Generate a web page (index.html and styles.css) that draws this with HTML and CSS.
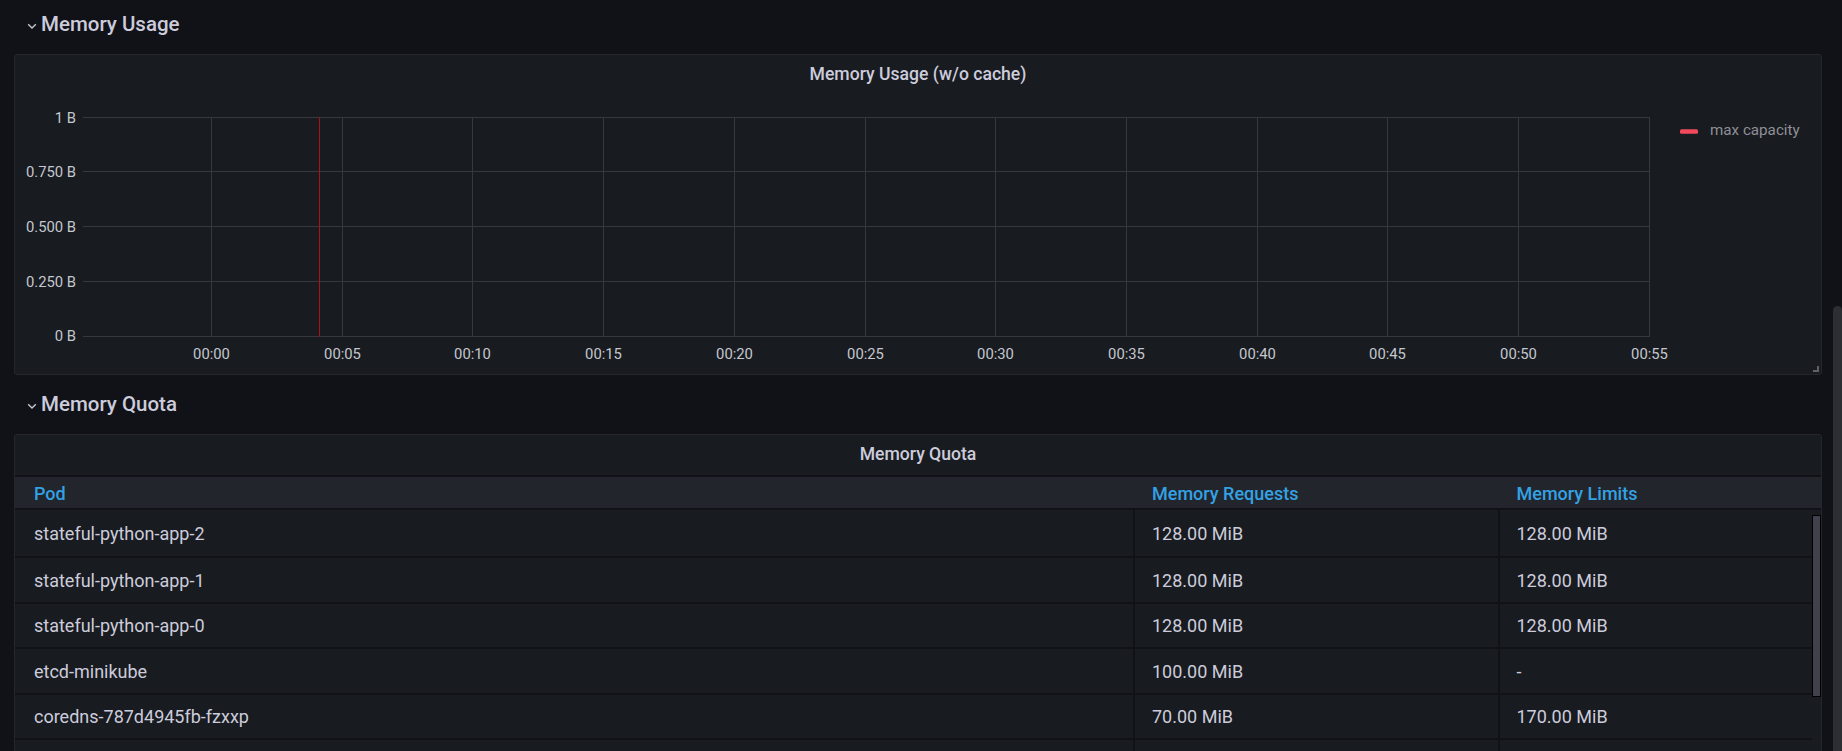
FILE: index.html
```html
<!DOCTYPE html>
<html>
<head>
<meta charset="utf-8">
<title>Memory</title>
<link rel="stylesheet" href="styles.css">
</head>
<body>
<div class="layout">
  <main class="dashboard">
    <div class="row-title">
      <svg class="chevron" width="10" height="7" viewBox="0 0 10 7"><polyline points="1.2,1.2 5,5 8.8,1.2"/></svg>
      <span>Memory Usage</span>
    </div>

    <section class="panel panel-graph">
      <header class="panel-header">Memory Usage (w/o cache)</header>
      <svg class="graph" width="1806" height="282" viewBox="0 0 1806 282">
        <g class="grid">
          <line x1="68" y1="25.5" x2="1635" y2="25.5"/>
          <line x1="68" y1="79.5" x2="1635" y2="79.5"/>
          <line x1="68" y1="134.5" x2="1635" y2="134.5"/>
          <line x1="68" y1="189.5" x2="1635" y2="189.5"/>
          <line x1="68" y1="244.5" x2="1635" y2="244.5"/>
          <line x1="196.5" y1="25" x2="196.5" y2="245"/>
          <line x1="327.5" y1="25" x2="327.5" y2="245"/>
          <line x1="457.5" y1="25" x2="457.5" y2="245"/>
          <line x1="588.5" y1="25" x2="588.5" y2="245"/>
          <line x1="719.5" y1="25" x2="719.5" y2="245"/>
          <line x1="850.5" y1="25" x2="850.5" y2="245"/>
          <line x1="980.5" y1="25" x2="980.5" y2="245"/>
          <line x1="1111.5" y1="25" x2="1111.5" y2="245"/>
          <line x1="1242.5" y1="25" x2="1242.5" y2="245"/>
          <line x1="1372.5" y1="25" x2="1372.5" y2="245"/>
          <line x1="1503.5" y1="25" x2="1503.5" y2="245"/>
          <line x1="1634.5" y1="25" x2="1634.5" y2="245"/>
        </g>
        <line class="marker" x1="304.5" y1="25" x2="304.5" y2="245"/>
        <g class="axis y-axis">
          <text x="61" y="30.5">1 B</text>
          <text x="61" y="84.5">0.750 B</text>
          <text x="61" y="139.5">0.500 B</text>
          <text x="61" y="194.5">0.250 B</text>
          <text x="61" y="249">0 B</text>
        </g>
        <g class="axis x-axis">
          <text x="196.5" y="267">00:00</text>
          <text x="327.5" y="267">00:05</text>
          <text x="457.5" y="267">00:10</text>
          <text x="588.5" y="267">00:15</text>
          <text x="719.5" y="267">00:20</text>
          <text x="850.5" y="267">00:25</text>
          <text x="980.5" y="267">00:30</text>
          <text x="1111.5" y="267">00:35</text>
          <text x="1242.5" y="267">00:40</text>
          <text x="1372.5" y="267">00:45</text>
          <text x="1503.5" y="267">00:50</text>
          <text x="1634.5" y="267">00:55</text>
        </g>
        <g class="legend">
          <rect x="1665" y="37.3" width="18" height="4.4" rx="1.5"/>
          <text x="1695" y="43">max capacity</text>
        </g>
      </svg>
      <span class="resize-handle"></span>
    </section>

    <div class="row-title row-title-next">
      <svg class="chevron" width="10" height="7" viewBox="0 0 10 7"><polyline points="1.2,1.2 5,5 8.8,1.2"/></svg>
      <span>Memory Quota</span>
    </div>

    <section class="panel panel-table">
      <header class="panel-header">Memory Quota</header>
      <div class="table">
        <div class="thead">
          <div class="th">Pod</div>
          <div class="th">Memory Requests</div>
          <div class="th">Memory Limits</div>
        </div>
        <div class="tbody-wrap">
          <div class="tbody">
            <div class="tr"><div class="td">stateful-python-app-2</div><div class="td">128.00 MiB</div><div class="td">128.00 MiB</div></div>
            <div class="tr"><div class="td">stateful-python-app-1</div><div class="td">128.00 MiB</div><div class="td">128.00 MiB</div></div>
            <div class="tr"><div class="td">stateful-python-app-0</div><div class="td">128.00 MiB</div><div class="td">128.00 MiB</div></div>
            <div class="tr"><div class="td">etcd-minikube</div><div class="td">100.00 MiB</div><div class="td">-</div></div>
            <div class="tr"><div class="td">coredns-787d4945fb-fzxxp</div><div class="td">70.00 MiB</div><div class="td">170.00 MiB</div></div>
            <div class="tr"><div class="td"></div><div class="td"></div><div class="td"></div></div>
          </div>
          <div class="vscroll"><div class="vthumb"></div></div>
        </div>
      </div>
    </section>
  </main>
  <div class="page-scroll"><div class="page-thumb"></div></div>
</div>
</body>
</html>
```

FILE: styles.css
```css
html, body {
  margin: 0;
  height: 100%;
  overflow: hidden;
  background: #111217;
}

body {
  font-family: Roboto, "Liberation Sans", Arial, sans-serif;
  color: #ccccdc;
}

.layout {
  display: flex;
  height: 751px;
  overflow: hidden;
}

.dashboard {
  flex: 1;
  min-width: 0;
  padding: 0 11px 0 14px;
}

.page-scroll {
  width: 9px;
  padding-top: 306px;
  overflow: hidden;
}

.page-thumb {
  height: 500px;
  background: #2c2e33;
  border-radius: 5px 5px 0 0;
}

.row-title {
  height: 48px;
  display: flex;
  align-items: center;
  padding-left: 13px;
  font-size: 20.5px;
  font-weight: 500;
  color: #ccccdc;
}

.row-title-next {
  margin-top: 5px;
}

.chevron {
  flex: none;
  margin: 4px 4px 0 0;
  fill: none;
  stroke: #c4c6d2;
  stroke-width: 1.4;
}

.panel {
  position: relative;
  margin-top: 6px;
  background: #181b1f;
  border: 1px solid #24262b;
  border-radius: 3px;
}

.panel-header {
  height: 37px;
  display: flex;
  align-items: center;
  justify-content: center;
  font-size: 17.6px;
  font-weight: 500;
  color: #ccccdc;
}

.graph {
  display: block;
}

.grid line {
  stroke: #35383d;
  stroke-width: 1;
}

.marker {
  stroke: #a8121c;
  stroke-width: 1;
}

.axis text {
  font-family: Roboto, "Liberation Sans", Arial, sans-serif;
  font-size: 14.8px;
  fill: #c5c7d0;
}

.y-axis text {
  text-anchor: end;
}

.x-axis text {
  text-anchor: middle;
}

.legend rect {
  fill: #f2495c;
}

.legend text {
  font-family: Roboto, "Liberation Sans", Arial, sans-serif;
  font-size: 15.2px;
  fill: #8e8f99;
}

.resize-handle {
  position: absolute;
  right: 2px;
  bottom: 2px;
  width: 6px;
  height: 6px;
  box-sizing: border-box;
  border-right: 2px solid #5f6167;
  border-bottom: 2px solid #5f6167;
}

.table {
  padding-top: 3px;
}

.thead {
  display: grid;
  grid-template-columns: 1118px 364.5px 1fr;
  height: 31px;
  background: #22252b;
  border-top: 2px solid #111217;
  border-bottom: 2px solid #111217;
}

.th {
  display: flex;
  align-items: center;
  padding-left: 19px;
  padding-top: 1px;
  font-size: 18px;
  font-weight: 500;
  color: #33a2e5;
  white-space: nowrap;
}

.th + .th {
  border-left: 2px solid transparent;
  padding-left: 17px;
}

.tbody-wrap {
  display: flex;
}

.tbody {
  flex: 1;
  min-width: 0;
}

.tr {
  display: grid;
  grid-template-columns: 1118px 364.5px 1fr;
  height: 43.5px;
  border-bottom: 2px solid #111217;
}

.tr:first-child {
  height: 46px;
}

.td {
  display: flex;
  align-items: center;
  padding-left: 19px;
  padding-top: 1px;
  font-size: 18px;
  color: #ccccdc;
  white-space: nowrap;
}

.td + .td {
  border-left: 2px solid #111217;
  padding-left: 17px;
}

.vscroll {
  width: 9px;
  padding-top: 5px;
}

.vthumb {
  box-sizing: border-box;
  width: 9px;
  height: 182px;
  background: #3f424c;
  border: 1px solid #000;
}
```
